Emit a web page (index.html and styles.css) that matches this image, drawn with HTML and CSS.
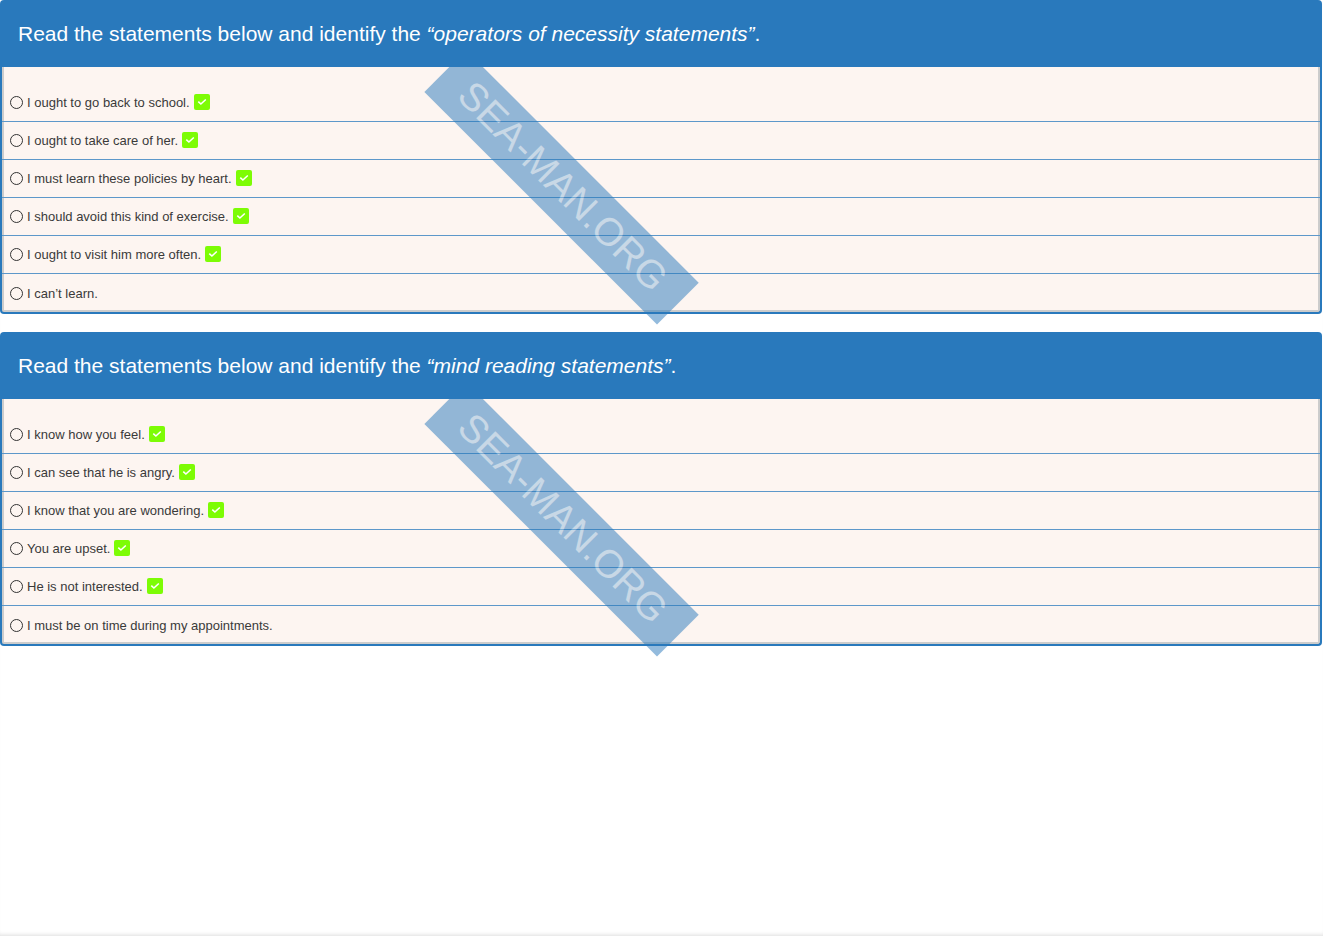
FILE: index.html
```html
<!DOCTYPE html>
<html lang="en">
<head>
  <meta charset="utf-8">
  <meta name="viewport" content="width=device-width, initial-scale=1">
  <title>Read the statements below</title>
  <link rel="stylesheet" href="styles.css">
</head>
<body>

<svg class="sprite" aria-hidden="true">
  <symbol id="check" viewBox="0 0 16 16">
    <rect width="16" height="16" rx="2" fill="#7dfc05"/>
    <path d="M4.3 7.6l2.6 2.4 4.9-4.5" fill="none" stroke="#fff" stroke-width="1.6"/>
  </symbol>
</svg>

<main>
  <fieldset class="quiz">
    <legend class="question">Read the statements below and identify the <em>“operators of necessity statements”</em>.</legend>
    <div class="answers">
      <div class="watermark">SEA-MAN.ORG</div>
      <label><input type="radio" name="q1"><span>I ought to go back to school.</span><svg class="check"><use href="#check"/></svg></label>
      <label><input type="radio" name="q1"><span>I ought to take care of her.</span><svg class="check"><use href="#check"/></svg></label>
      <label><input type="radio" name="q1"><span>I must learn these policies by heart.</span><svg class="check"><use href="#check"/></svg></label>
      <label><input type="radio" name="q1"><span>I should avoid this kind of exercise.</span><svg class="check"><use href="#check"/></svg></label>
      <label><input type="radio" name="q1"><span>I ought to visit him more often.</span><svg class="check"><use href="#check"/></svg></label>
      <label><input type="radio" name="q1"><span>I can’t learn.</span></label>
    </div>
  </fieldset>

  <fieldset class="quiz">
    <legend class="question">Read the statements below and identify the <em>“mind reading statements”</em>.</legend>
    <div class="answers">
      <div class="watermark">SEA-MAN.ORG</div>
      <label><input type="radio" name="q2"><span>I know how you feel.</span><svg class="check"><use href="#check"/></svg></label>
      <label><input type="radio" name="q2"><span>I can see that he is angry.</span><svg class="check"><use href="#check"/></svg></label>
      <label><input type="radio" name="q2"><span>I know that you are wondering.</span><svg class="check"><use href="#check"/></svg></label>
      <label><input type="radio" name="q2"><span>You are upset.</span><svg class="check"><use href="#check"/></svg></label>
      <label><input type="radio" name="q2"><span>He is not interested.</span><svg class="check"><use href="#check"/></svg></label>
      <label><input type="radio" name="q2"><span>I must be on time during my appointments.</span></label>
    </div>
  </fieldset>
</main>

</body>
</html>
```

FILE: styles.css
```css
* {
  box-sizing: border-box;
}
body {
  margin: 0;
  background-color: #fff;
  color: #3a3a3a;
  font-family: "Liberation Sans", Arial, sans-serif;
  font-size: 13px;
}
main {
  display: flex;
  flex-direction: column;
  gap: 18px;
  min-height: 100vh;
  padding-right: 1px;
  box-shadow: inset 0 -4px 4px -3px #ddd;
}
.sprite {
  position: absolute;
  width: 0;
  height: 0;
}

.quiz {
  min-width: 0;
  margin: 0;
  padding: 0;
  border: 0;
}
.question {
  display: block;
  width: 100%;
  padding: 18px;
  border-radius: 4px 4px 0 0;
  background-color: #2979bc;
  color: #fff;
  font-size: 21px;
  line-height: 31px;
}
.answers {
  position: relative;
  padding-top: 17px;
  border: 2px solid #2979bc;
  border-top: 0;
  border-radius: 0 0 4px 4px;
  background-color: #fdf5f1;
  box-shadow: inset 2px 0 #ccc, inset -2px 0 #ccc, inset 0 -2px #ccc;
  /* keep the ribbon under the question bar but let it run out below */
  clip-path: inset(0 0 -20px 0);
}
.answers label {
  display: flex;
  align-items: center;
  gap: 4px;
  height: 38px;
  padding-left: 8px;
  border-bottom: 1px solid #5d98ca;
}
.answers label:last-child {
  border-bottom: 0;
}
.answers input {
  appearance: none;
  width: 13px;
  height: 13px;
  margin: 0;
  border: 1px solid #333;
  border-radius: 50%;
}
.answers input:checked {
  background-color: #2979bc;
}
.check {
  width: 16px;
  height: 16px;
  margin-bottom: 2px;
}

.watermark {
  position: absolute;
  top: 91px;
  left: 30%;
  padding: 5px 26px 9px;
  background-color: #2979bc;
  color: rgba(255, 255, 255, 0.5);
  font-size: 39px;
  line-height: 45px;
  opacity: 0.5;
  transform: rotate(45deg);
  pointer-events: none;
}
```
